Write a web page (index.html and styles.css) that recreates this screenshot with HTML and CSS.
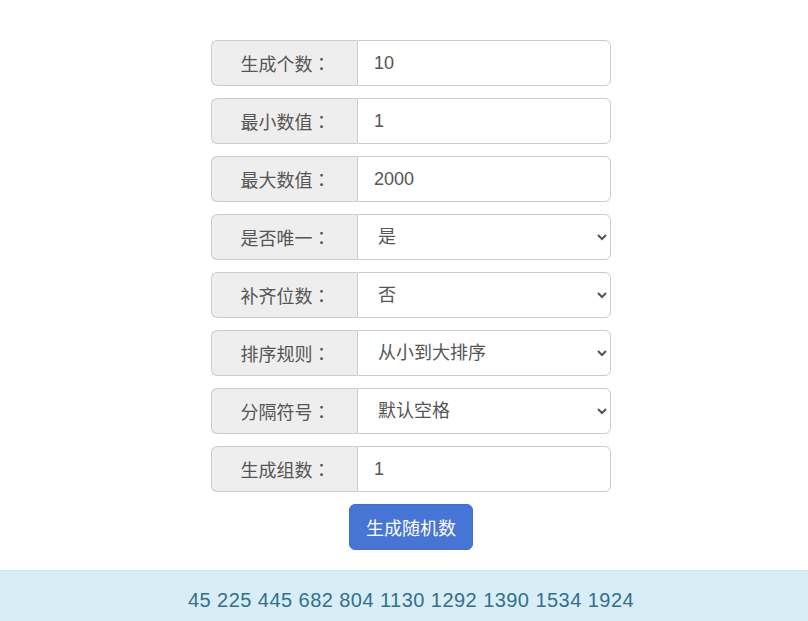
FILE: index.html
```html
<!DOCTYPE html>
<html lang="zh-CN">
<head>
<meta charset="utf-8">
<title>随机数生成器</title>
<link rel="stylesheet" href="styles.css">
</head>
<body>
<div class="main">
  <form class="form">
    <div class="group"><span class="addon">生成个数<span class="colon">：</span></span><input class="control" type="text" value="10"></div>
    <div class="group"><span class="addon">最小数值<span class="colon">：</span></span><input class="control" type="text" value="1"></div>
    <div class="group"><span class="addon">最大数值<span class="colon">：</span></span><input class="control" type="text" value="2000"></div>
    <div class="group"><span class="addon">是否唯一<span class="colon">：</span></span><select class="control select"><option>是</option><option>否</option></select></div>
    <div class="group"><span class="addon">补齐位数<span class="colon">：</span></span><select class="control select"><option>否</option><option>是</option></select></div>
    <div class="group"><span class="addon">排序规则<span class="colon">：</span></span><select class="control select"><option>从小到大排序</option><option>从大到小排序</option><option>不排序</option></select></div>
    <div class="group"><span class="addon">分隔符号<span class="colon">：</span></span><select class="control select"><option>默认空格</option><option>逗号</option><option>换行</option></select></div>
    <div class="group"><span class="addon">生成组数<span class="colon">：</span></span><input class="control" type="text" value="1"></div>
    <div class="actions"><button type="button" class="btn">生成随机数</button></div>
  </form>
</div>
<div class="result">45 225 445 682 804 1130 1292 1390 1534 1924</div>
</body>
</html>
```
FILE: styles.css
```css
* { box-sizing: border-box; }
html, body { margin: 0; padding: 0; background: #fff; }
body {
  font-family: "Liberation Sans", "Noto Sans CJK SC", sans-serif;
  color: #555;
}
.main { padding: 40px 0 0 14px; }
.form {
  width: 400px;
  margin: 0 auto;
  display: flex;
  flex-direction: column;
  gap: 12px;
}
.group {
  display: flex;
  height: 46px;
}
.addon {
  width: 146px;
  flex: none;
  display: flex;
  align-items: center;
  justify-content: center;
  background: #eee;
  border: 1px solid #ccc;
  border-right: none;
  border-radius: 6px 0 0 6px;
  font-size: 18px;
  color: #555;
  padding-left: 2px;
}
.colon { font-family: "Noto Sans CJK TC", sans-serif; }
.control {
  flex: 1;
  min-width: 0;
  height: 46px;
  border: 1px solid #ccc;
  border-radius: 0 6px 6px 0;
  padding: 0 16px;
  font-family: "Liberation Sans", "Noto Sans CJK SC", sans-serif;
  font-size: 18px;
  color: #555;
  background: #fff;
  outline: none;
}
.select { padding: 0 12px 0 16px; }
.actions {
  display: flex;
  justify-content: center;
}
.btn {
  width: 124px;
  height: 46px;
  border: 1px solid #3f6fd0;
  border-radius: 6px;
  background: #4675d6;
  color: #fff;
  font-family: "Liberation Sans", "Noto Sans CJK SC", sans-serif;
  font-size: 18px;
  padding: 0;
}
.result {
  margin-top: 20px;
  background: #d9edf7;
  border-top: 1px solid #bce8f1;
  color: #31708f;
  text-align: center;
  font-size: 20px;
  letter-spacing: 0.45px;
  line-height: 28px;
  padding: 15px 0 20px 14px;
}
```
